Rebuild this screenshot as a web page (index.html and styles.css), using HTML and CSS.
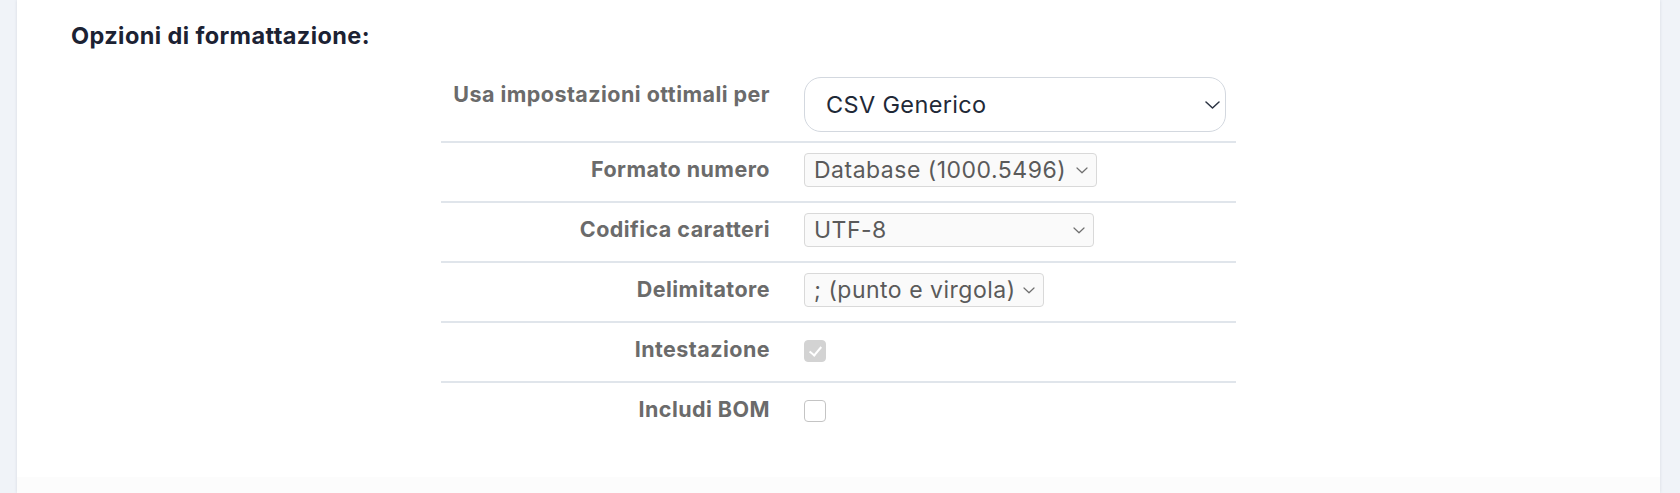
FILE: index.html
```html
<!DOCTYPE html>
<html lang="it">
<head>
<meta charset="utf-8">
<meta name="viewport" content="width=device-width, initial-scale=1">
<title>Esportazione - Opzioni di formattazione</title>
<link rel="stylesheet" href="styles.css">
</head>
<body>

<div class="panel">
  <div class="panel-body">
    <h3 class="section-title">Opzioni di formattazione:</h3>

    <div class="opts">
      <div class="opt-row opt-row-first">
        <label class="opt-label" for="preset">Usa impostazioni ottimali per</label>
        <div class="opt-field">
          <span class="pick pick-lg">
            <select id="preset" class="sel sel-lg">
              <option>CSV Generico</option>
              <option>Microsoft Excel</option>
              <option>LibreOffice Calc</option>
            </select>
            <svg class="pick-arrow" width="15" height="8" viewBox="0 0 15 8"><path d="M1 1l6.5 6 6.5-6" fill="none" stroke="#2b3342" stroke-width="1.5" stroke-linecap="round" stroke-linejoin="round"/></svg>
          </span>
        </div>
      </div>

      <div class="opt-row">
        <label class="opt-label" for="numfmt">Formato numero</label>
        <div class="opt-field">
          <span class="pick">
            <select id="numfmt" class="sel sel-sm w-num">
              <option>Database (1000.5496)</option>
              <option>Italiano (1.000,5496)</option>
            </select>
            <svg class="pick-arrow" width="12" height="7" viewBox="0 0 12 7"><path d="M1 1l5 4.8 5-4.8" fill="none" stroke="#6f6f6f" stroke-width="1.2" stroke-linecap="round" stroke-linejoin="round"/></svg>
          </span>
        </div>
      </div>

      <div class="opt-row">
        <label class="opt-label" for="charset">Codifica caratteri</label>
        <div class="opt-field">
          <span class="pick">
            <select id="charset" class="sel sel-sm w-enc">
              <option>UTF-8</option>
              <option>ISO-8859-1</option>
            </select>
            <svg class="pick-arrow" width="12" height="7" viewBox="0 0 12 7"><path d="M1 1l5 4.8 5-4.8" fill="none" stroke="#6f6f6f" stroke-width="1.2" stroke-linecap="round" stroke-linejoin="round"/></svg>
          </span>
        </div>
      </div>

      <div class="opt-row">
        <label class="opt-label" for="delim">Delimitatore</label>
        <div class="opt-field">
          <span class="pick">
            <select id="delim" class="sel sel-sm w-del">
              <option>; (punto e virgola)</option>
              <option>, (virgola)</option>
            </select>
            <svg class="pick-arrow" width="12" height="7" viewBox="0 0 12 7"><path d="M1 1l5 4.8 5-4.8" fill="none" stroke="#6f6f6f" stroke-width="1.2" stroke-linecap="round" stroke-linejoin="round"/></svg>
          </span>
        </div>
      </div>

      <div class="opt-row">
        <label class="opt-label" for="header">Intestazione</label>
        <div class="opt-field opt-check">
          <input type="checkbox" id="header" class="chk" checked disabled>
        </div>
      </div>

      <div class="opt-row opt-row-last">
        <label class="opt-label" for="bom">Includi BOM</label>
        <div class="opt-field opt-check">
          <input type="checkbox" id="bom" class="chk">
        </div>
      </div>
    </div>
  </div>
  <div class="panel-foot"></div>
</div>

</body>
</html>
```

FILE: styles.css
```css
body {
  margin: 0;
  background-color: #f0f3f8;
  font-family: Inter, "Noto Sans", sans-serif;
  color: #1f2937;
}

.panel {
  margin: 0 20px 0 17px;
  height: 493px;
  background-color: #fff;
  box-shadow: 0 0 3px rgba(30, 41, 59, 0.12);
  display: flex;
  flex-direction: column;
}

.panel-body {
  flex: 1;
  padding: 21px 50px 0 50px;
}

.panel-foot {
  height: 16px;
  background-color: #fcfcfc;
}

.section-title {
  margin: 0 0 17px 0;
  padding-left: 4px;
  font-size: 23.5px;
  line-height: 30px;
  letter-spacing: 0.4px;
  font-weight: 700;
  color: #1c2233;
}

/* options table */
.opts {
  width: 795px;
  margin: 0 auto;
}

.opt-row {
  display: flex;
  height: 60px;
  box-sizing: border-box;
  border-bottom: 2px solid #e0e5eb;
}

.opt-row-first {
  height: 75px;
}

.opt-row-last {
  border-bottom: none;
}

.opt-label {
  width: 343px;
  box-sizing: border-box;
  padding: 13px 14px 0 0;
  text-align: right;
  font-size: 21.5px;
  line-height: 26px;
  letter-spacing: 0.45px;
  font-weight: 700;
  color: #6b6b6b;
}

.opt-field {
  flex: 1;
  padding: 10px 0 0 20px;
}

.opt-row-first .opt-field {
  padding-top: 9px;
}

.opt-check {
  padding-top: 17px;
}

/* selects */
.pick {
  position: relative;
  display: inline-block;
}

.pick-arrow {
  position: absolute;
  right: 9px;
  top: 14px;
  pointer-events: none;
}

.pick-lg .pick-arrow {
  right: 6px;
  top: 24px;
}

.sel {
  appearance: none;
  -webkit-appearance: none;
  margin: 0;
  font-family: Inter, "Noto Sans", sans-serif;
  box-sizing: border-box;
  display: block;
}

.sel-lg {
  width: 422px;
  height: 55px;
  padding: 0 40px 0 21px;
  font-size: 23.5px;
  letter-spacing: 0.35px;
  color: #1f2937;
  background-color: #fff;
  border: 1.5px solid #d3d8df;
  border-radius: 17px;
}

.sel-sm {
  height: 34px;
  padding: 0 26px 0 9px;
  font-size: 23px;
  letter-spacing: 0.5px;
  color: #5a5a5a;
  background-color: #fafafa;
  border: 1px solid #d9d9d9;
  border-radius: 4px;
}

.w-num { width: 293px; }
.w-enc { width: 290px; }
.w-del { width: 240px; }

/* checkboxes */
.chk {
  appearance: none;
  -webkit-appearance: none;
  margin: 0;
  width: 22px;
  height: 22px;
  border: 1px solid #c4c4c4;
  border-radius: 4px;
  background-color: #fff;
  position: relative;
  display: block;
}

.chk:checked {
  background-color: #d3d3d3;
  border-color: #d3d3d3;
}

.chk:checked::after {
  content: "";
  position: absolute;
  left: 7px;
  top: 3px;
  width: 5px;
  height: 10px;
  border: solid #fff;
  border-width: 0 2.5px 2.5px 0;
  transform: rotate(40deg);
}
```
